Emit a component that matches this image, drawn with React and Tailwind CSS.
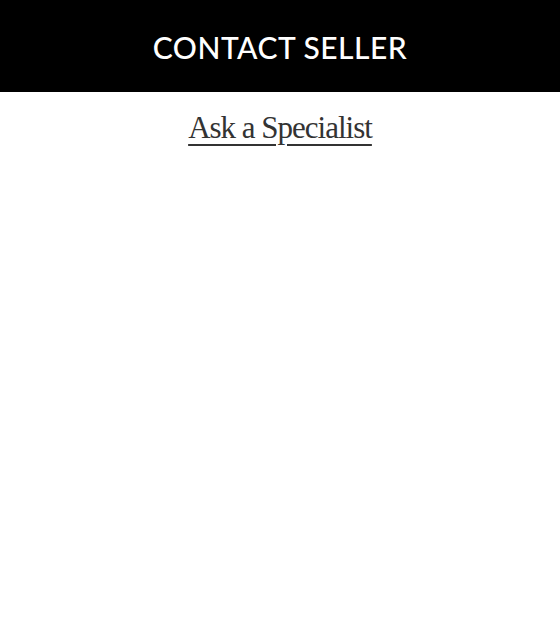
export default function App() {
  return (
    <div className="w-[560px] h-[620px] bg-white">
      <div className="h-[92px] bg-black flex items-center justify-center">
        <span className="text-white text-[30px] tracking-[0.5px] font-medium font-['Lato','Liberation_Sans',sans-serif] pt-[2px]">
          CONTACT SELLER
        </span>
      </div>
      <div className="flex justify-center pt-[18px]">
        <a href="#" className="text-[#333] text-[31px] leading-[36px] underline underline-offset-[6px] decoration-[2px] font-['Liberation_Serif',serif] tracking-[-1px]">
          Ask a Specialist
        </a>
      </div>
    </div>
  );
}
